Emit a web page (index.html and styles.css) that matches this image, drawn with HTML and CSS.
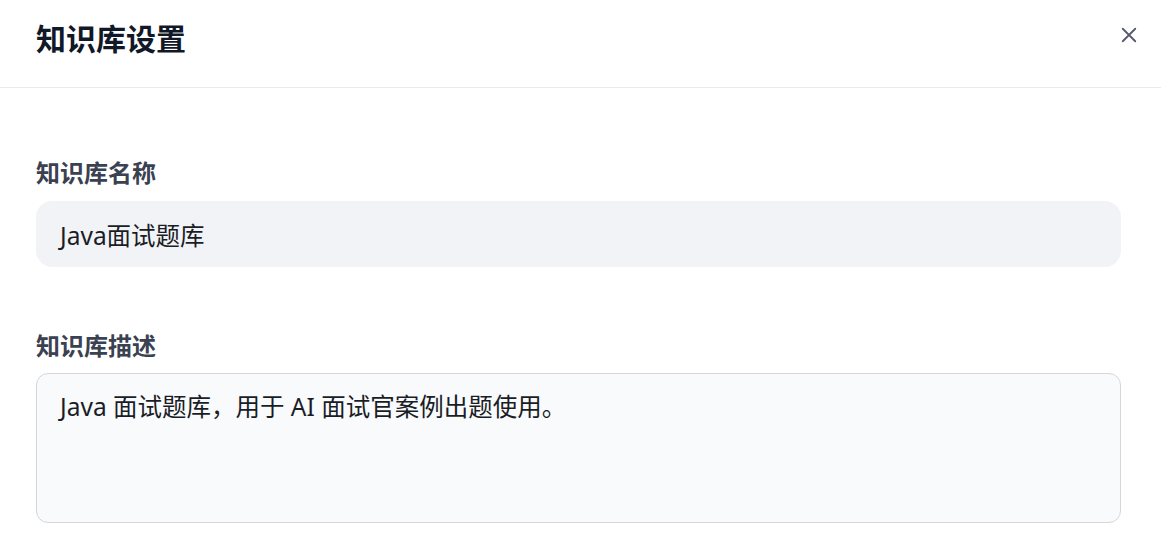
FILE: index.html
```html
<!DOCTYPE html>
<html lang="zh-CN">
<head>
<meta charset="utf-8">
<title>知识库设置</title>
<link rel="stylesheet" href="styles.css">
</head>
<body>
<div class="dialog">
  <header class="dialog-header">
    <h1 class="dialog-title">知识库设置</h1>
    <button class="close-btn" aria-label="关闭">
      <svg width="24" height="24" viewBox="0 0 24 24" fill="none" stroke="currentColor" stroke-width="2.2" stroke-linecap="round">
        <path d="M4.5 4.5 L19.5 19.5 M19.5 4.5 L4.5 19.5"/>
      </svg>
    </button>
  </header>
  <main class="dialog-body">
    <div class="field">
      <label class="field-label">知识库名称</label>
      <div class="text-input">Java面试题库</div>
    </div>
    <div class="field field-second">
      <label class="field-label">知识库描述</label>
      <div class="text-area">Java 面试题库，用于 AI 面试官案例出题使用。</div>
    </div>
  </main>
</div>
</body>
</html>
```

FILE: styles.css
```css
* { box-sizing: border-box; }
html, body {
  margin: 0;
  padding: 0;
  background: #ffffff;
  font-family: "Noto Sans", "Noto Sans CJK SC", sans-serif;
}
.dialog {
  width: 1161px;
  height: 546px;
  overflow: hidden;
}
.dialog-header {
  height: 88px;
  display: flex;
  justify-content: space-between;
  align-items: flex-start;
  padding: 16px 20px 0 36px;
  border-bottom: 1px solid #e8eaee;
}
.dialog-title {
  margin: 0;
  font-size: 30px;
  line-height: 42px;
  font-weight: 700;
  color: #111827;
  font-family: "Noto Sans CJK SC", sans-serif;
}
.close-btn {
  margin-top: 7px;
  width: 24px;
  height: 24px;
  padding: 0;
  border: 0;
  background: transparent;
  color: #555a6d;
  display: flex;
  align-items: center;
  justify-content: center;
}
.close-btn svg { width: 20px; height: 20px; }
.dialog-body {
  padding: 66px 40px 0 36px;
}
.field {
  display: flex;
  flex-direction: column;
  gap: 11px;
}
.field-second {
  margin-top: 60px;
  gap: 10px;
}
.field-label {
  font-family: "Noto Sans CJK SC", sans-serif;
  font-size: 24px;
  line-height: 36px;
  font-weight: 700;
  color: #3a4150;
}
.text-input {
  height: 66px;
  background: #f2f3f6;
  border-radius: 16px;
  padding: 0 24px;
  display: flex;
  align-items: center;
  font-size: 24.5px;
  color: #1a1d26;
}
.text-area {
  height: 150px;
  background: #f9fafc;
  border: 1px solid #d4d6dc;
  border-radius: 12px;
  padding: 15px 23px;
  font-size: 24.5px;
  line-height: 36px;
  color: #1a1d26;
}
```
